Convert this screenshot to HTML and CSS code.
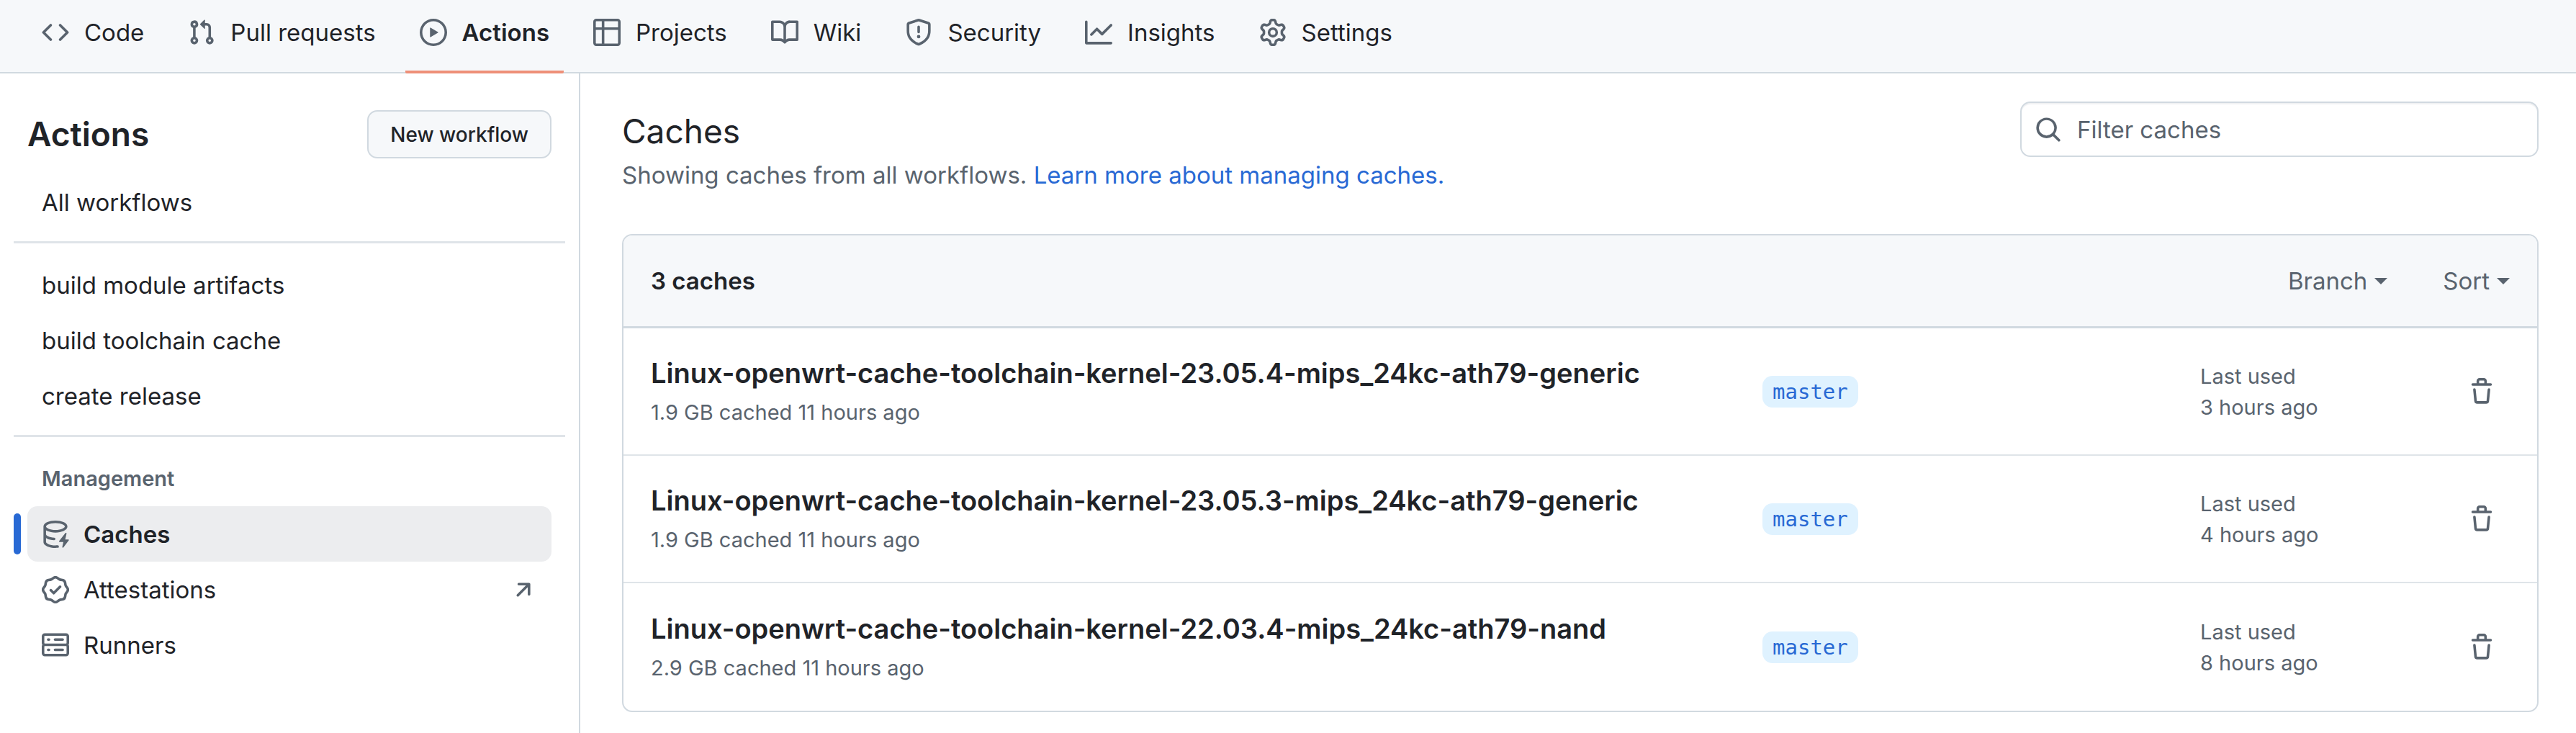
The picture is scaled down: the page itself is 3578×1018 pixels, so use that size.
FILE: index.html
```html
<!DOCTYPE html>
<html lang="en">
<head>
<meta charset="utf-8">
<meta name="viewport" content="width=device-width, initial-scale=1">
<title>Caches</title>
<link rel="stylesheet" href="styles.css">
</head>
<body>
<svg class="sprite" aria-hidden="true">
  <symbol id="trash" viewBox="0 0 16 16"><path d="M11 1.75V3h2.25a.75.75 0 0 1 0 1.5H2.75a.75.75 0 0 1 0-1.5H5V1.75C5 .784 5.784 0 6.75 0h2.5C10.216 0 11 .784 11 1.75ZM4.496 6.675l.66 6.6a.25.25 0 0 0 .249.225h5.19a.25.25 0 0 0 .249-.225l.66-6.6a.75.75 0 0 1 1.492.149l-.66 6.6A1.748 1.748 0 0 1 10.595 15h-5.19a1.75 1.75 0 0 1-1.741-1.575l-.66-6.6a.75.75 0 1 1 1.492-.15ZM6.5 1.75V3h3V1.75a.25.25 0 0 0-.25-.25h-2.5a.25.25 0 0 0-.25.25Z"/></symbol>
</svg>

<nav class="repo-nav" aria-label="Repository">
  <a class="tab" href="#code"><svg class="icon" viewBox="0 0 16 16"><path d="m11.28 3.22 4.25 4.25a.75.75 0 0 1 0 1.06l-4.25 4.25a.749.749 0 0 1-1.275-.326.749.749 0 0 1 .215-.734L13.94 8l-3.72-3.72a.749.749 0 0 1 .326-1.275.749.749 0 0 1 .734.215Zm-6.56 0a.751.751 0 0 1 1.042.018.751.751 0 0 1 .018 1.042L2.06 8l3.72 3.72a.749.749 0 0 1-.326 1.275.749.749 0 0 1-.734-.215L.47 8.53a.75.75 0 0 1 0-1.06Z"/></svg>Code</a>
  <a class="tab" href="#pulls"><svg class="icon" viewBox="0 0 16 16"><path d="M1.5 3.25a2.25 2.25 0 1 1 3 2.122v5.256a2.251 2.251 0 1 1-1.5 0V5.372A2.25 2.25 0 0 1 1.5 3.25Zm5.677-.177L9.573.677A.25.25 0 0 1 10 .854V2.5h1A2.5 2.5 0 0 1 13.5 5v5.628a2.251 2.251 0 1 1-1.5 0V5a1 1 0 0 0-1-1h-1v1.646a.25.25 0 0 1-.427.177L7.177 3.427a.25.25 0 0 1 0-.354ZM3.75 2.5a.75.75 0 1 0 0 1.5.75.75 0 0 0 0-1.5Zm0 9.5a.75.75 0 1 0 0 1.5.75.75 0 0 0 0-1.5Zm8.25.75a.75.75 0 1 0 1.5 0 .75.75 0 0 0-1.5 0Z"/></svg>Pull requests</a>
  <a class="tab tab-current" href="#actions" aria-current="page"><svg class="icon" viewBox="0 0 16 16"><path d="M8 0a8 8 0 1 1 0 16A8 8 0 0 1 8 0ZM1.5 8a6.5 6.5 0 1 0 13 0 6.5 6.5 0 0 0-13 0Zm4.879-2.773 4.264 2.559a.25.25 0 0 1 0 .428l-4.264 2.559A.25.25 0 0 1 6 10.559V5.442a.25.25 0 0 1 .379-.215Z"/></svg>Actions</a>
  <a class="tab" href="#projects"><svg class="icon" viewBox="0 0 16 16"><path d="M0 1.75C0 .784.784 0 1.75 0h12.5C15.216 0 16 .784 16 1.75v12.5A1.75 1.75 0 0 1 14.25 16H1.75A1.75 1.75 0 0 1 0 14.25ZM6.5 6.5v8h7.75a.25.25 0 0 0 .25-.25V6.5Zm8-1.5V1.75a.25.25 0 0 0-.25-.25H6.5V5Zm-13 1.5v7.75c0 .138.112.25.25.25H5v-8ZM5 5V1.5H1.75a.25.25 0 0 0-.25.25V5Z"/></svg>Projects</a>
  <a class="tab" href="#wiki"><svg class="icon" viewBox="0 0 16 16"><path d="M0 1.75A.75.75 0 0 1 .75 1h4.253c1.227 0 2.317.59 3 1.501A3.743 3.743 0 0 1 11.006 1h4.245a.75.75 0 0 1 .75.75v10.5a.75.75 0 0 1-.75.75h-4.507a2.25 2.25 0 0 0-1.591.659l-.622.621a.75.75 0 0 1-1.06 0l-.622-.621A2.25 2.25 0 0 0 5.258 13H.75a.75.75 0 0 1-.75-.75Zm7.251 10.324.004-5.073-.002-2.253A2.25 2.25 0 0 0 5.003 2.5H1.5v9h3.757a3.75 3.75 0 0 1 1.994.574ZM8.755 4.75l-.004 7.322a3.752 3.752 0 0 1 1.992-.572H14.5v-9h-3.495a2.25 2.25 0 0 0-2.25 2.25Z"/></svg>Wiki</a>
  <a class="tab" href="#security"><svg class="icon" viewBox="0 0 16 16"><path d="M7.467.133a1.748 1.748 0 0 1 1.066 0l5.25 1.68A1.75 1.75 0 0 1 15 3.48V7c0 1.566-.32 3.182-1.303 4.682-.983 1.498-2.585 2.813-5.032 3.855a1.697 1.697 0 0 1-1.33 0c-2.447-1.042-4.049-2.357-5.032-3.855C1.32 10.182 1 8.566 1 7V3.48a1.75 1.75 0 0 1 1.217-1.667Zm.61 1.429a.25.25 0 0 0-.153 0l-5.25 1.68a.25.25 0 0 0-.174.238V7c0 1.358.275 2.666 1.057 3.86.784 1.194 2.121 2.34 4.366 3.297a.196.196 0 0 0 .154 0c2.245-.956 3.582-2.104 4.366-3.298C13.225 9.666 13.5 8.36 13.5 7V3.48a.251.251 0 0 0-.174-.237l-5.25-1.68ZM8.75 4.75v3a.75.75 0 0 1-1.5 0v-3a.75.75 0 0 1 1.5 0ZM9 10.5a1 1 0 1 1-2 0 1 1 0 0 1 2 0Z"/></svg>Security</a>
  <a class="tab" href="#insights"><svg class="icon" viewBox="0 0 16 16"><path d="M1.5 1.75V13.5h13.75a.75.75 0 0 1 0 1.5H.75a.75.75 0 0 1-.75-.75V1.75a.75.75 0 0 1 1.5 0Zm14.28 2.53-5.25 5.25a.75.75 0 0 1-1.06 0L7 7.06 4.28 9.78a.751.751 0 0 1-1.042-.018.751.751 0 0 1-.018-1.042l3.25-3.25a.75.75 0 0 1 1.06 0L10 7.94l4.72-4.72a.751.751 0 0 1 1.042.018.751.751 0 0 1 .018 1.042Z"/></svg>Insights</a>
  <a class="tab" href="#settings"><svg class="icon" viewBox="0 0 16 16"><path d="M8 0a8.2 8.2 0 0 1 .701.031C9.444.095 9.99.645 10.16 1.29l.288 1.107c.018.066.079.158.212.224.231.114.454.243.668.386.123.082.233.09.299.071l1.103-.303c.644-.176 1.392.021 1.82.63.27.385.506.792.704 1.218.315.675.111 1.422-.364 1.891l-.814.806c-.049.048-.098.147-.088.294.016.257.016.515 0 .772-.01.147.038.246.088.294l.814.806c.475.469.679 1.216.364 1.891a7.977 7.977 0 0 1-.704 1.217c-.428.61-1.176.807-1.82.63l-1.102-.302c-.067-.019-.177-.011-.3.071a5.909 5.909 0 0 1-.668.386c-.133.066-.194.158-.211.224l-.29 1.106c-.168.646-.715 1.196-1.458 1.26a8.006 8.006 0 0 1-1.402 0c-.743-.064-1.289-.614-1.458-1.26l-.289-1.106c-.018-.066-.079-.158-.212-.224a5.738 5.738 0 0 1-.668-.386c-.123-.082-.233-.09-.299-.071l-1.103.303c-.644.176-1.392-.021-1.82-.63a8.12 8.12 0 0 1-.704-1.218c-.315-.675-.111-1.422.363-1.891l.815-.806c.05-.048.098-.147.088-.294a6.214 6.214 0 0 1 0-.772c.01-.147-.038-.246-.088-.294l-.815-.806C.635 6.045.431 5.298.746 4.623a7.92 7.92 0 0 1 .704-1.217c.428-.61 1.176-.807 1.82-.63l1.102.302c.067.019.177.011.3-.071.214-.143.437-.272.668-.386.133-.066.194-.158.211-.224l.29-1.106C6.009.645 6.556.095 7.299.03 7.53.01 7.764 0 8 0Zm-.571 1.525c-.036.003-.108.036-.137.146l-.289 1.105c-.147.561-.549.967-.998 1.189-.173.086-.34.183-.5.29-.417.278-.97.423-1.529.27l-1.103-.303c-.109-.03-.175.016-.195.045-.22.312-.412.644-.573.99-.014.031-.021.11.059.19l.815.806c.411.406.562.957.53 1.456a4.709 4.709 0 0 0 0 .582c.032.499-.119 1.05-.53 1.456l-.815.806c-.081.08-.073.159-.059.19.162.346.353.677.573.989.02.03.085.076.195.046l1.102-.303c.56-.153 1.113-.008 1.53.27.161.107.328.204.501.29.447.222.85.629.997 1.189l.289 1.105c.029.109.101.143.137.146a6.6 6.6 0 0 0 1.142 0c.036-.003.108-.036.137-.146l.289-1.105c.147-.561.549-.967.998-1.189.173-.086.34-.183.5-.29.417-.278.97-.423 1.529-.27l1.103.303c.109.029.175-.016.195-.045.22-.313.411-.644.573-.99.014-.031.021-.11-.059-.19l-.815-.806c-.411-.406-.562-.957-.53-1.456a4.709 4.709 0 0 0 0-.582c-.032-.499.119-1.05.53-1.456l.815-.806c.081-.08.073-.159.059-.19a6.464 6.464 0 0 0-.573-.989c-.02-.03-.085-.076-.195-.046l-1.102.303c-.56.153-1.113.008-1.53-.27a4.44 4.44 0 0 0-.501-.29c-.447-.222-.85-.629-.997-1.189l-.289-1.105c-.029-.11-.101-.143-.137-.146a6.6 6.6 0 0 0-1.142 0ZM11 8a3 3 0 1 1-6 0 3 3 0 0 1 6 0ZM9.5 8a1.5 1.5 0 1 0-3.001.001A1.5 1.5 0 0 0 9.5 8Z"/></svg>Settings</a>
</nav>

<div class="layout">
  <aside class="sidebar">
    <div class="sidebar-head">
      <h2 class="sidebar-title">Actions</h2>
      <button class="button" type="button">New workflow</button>
    </div>
    <ul class="menu">
      <li><a class="menu-item" href="#all">All workflows</a></li>
    </ul>
    <hr class="divider">
    <ul class="menu">
      <li><a class="menu-item" href="#module">build module artifacts</a></li>
      <li><a class="menu-item" href="#toolchain">build toolchain cache</a></li>
      <li><a class="menu-item" href="#release">create release</a></li>
    </ul>
    <hr class="divider">
    <h3 class="menu-heading">Management</h3>
    <ul class="menu">
      <li><a class="menu-item menu-item-current" href="#caches" aria-current="page"><svg class="icon" viewBox="0 0 16 16"><path d="M2.5 5.724V8c0 .248.238.7 1.169 1.159.874.43 2.144.745 3.62.822a.75.75 0 1 1-.078 1.498c-1.622-.085-3.102-.432-4.204-.975a5.565 5.565 0 0 1-.507-.28V12.5c0 .133.058.318.282.551.227.237.591.483 1.101.707 1.015.447 2.47.742 4.117.742.406 0 .802-.018 1.183-.052a.751.751 0 1 1 .134 1.494C8.89 15.98 8.45 16 8 16c-1.805 0-3.475-.32-4.721-.869-.623-.274-1.173-.619-1.579-1.041-.408-.425-.7-.964-.7-1.59v-9c0-.626.292-1.165.7-1.591.406-.42.956-.766 1.579-1.04C4.525.32 6.195 0 8 0c1.806 0 3.476.32 4.721.869.623.274 1.173.619 1.579 1.041.408.425.7.964.7 1.59 0 .626-.292 1.165-.7 1.591-.406.42-.956.766-1.578 1.04C11.475 6.68 9.805 7 8 7c-1.805 0-3.475-.32-4.721-.869a6.15 6.15 0 0 1-.779-.407Zm0-2.224c0 .133.058.318.282.551.227.237.591.483 1.101.707C4.898 5.205 6.353 5.5 8 5.5c1.646 0 3.101-.295 4.118-.742.508-.224.873-.471 1.1-.708.224-.232.282-.417.282-.55 0-.133-.058-.318-.282-.551-.227-.237-.591-.483-1.101-.707C11.102 1.795 9.647 1.5 8 1.5c-1.646 0-3.101.295-4.118.742-.508.224-.873.471-1.1.708-.224.232-.282.417-.282.55Z"/><path d="M14.49 7.582a.375.375 0 0 0-.66-.313l-3.625 4.625a.375.375 0 0 0 .295.606h2.127l-.619 2.922a.375.375 0 0 0 .666.304l3.125-4.125A.375.375 0 0 0 15.5 11h-1.778l.769-3.418Z"/></svg>Caches</a></li>
      <li><a class="menu-item" href="#attestations"><svg class="icon" viewBox="0 0 16 16"><path d="m9.585.52.929.68c.153.112.331.186.518.215l1.138.175a2.678 2.678 0 0 1 2.24 2.24l.174 1.139c.029.187.103.365.215.518l.68.928a2.677 2.677 0 0 1 0 3.17l-.68.928a1.174 1.174 0 0 0-.215.518l-.175 1.138a2.678 2.678 0 0 1-2.241 2.241l-1.138.175a1.17 1.17 0 0 0-.518.215l-.928.68a2.677 2.677 0 0 1-3.17 0l-.928-.68a1.174 1.174 0 0 0-.518-.215L3.83 14.41a2.678 2.678 0 0 1-2.24-2.24l-.175-1.138a1.17 1.17 0 0 0-.215-.518l-.68-.928a2.677 2.677 0 0 1 0-3.17l.68-.928c.112-.153.186-.331.215-.518l.175-1.14a2.678 2.678 0 0 1 2.24-2.24l1.139-.175c.187-.029.365-.103.518-.215l.928-.68a2.677 2.677 0 0 1 3.17 0ZM7.303 1.728l-.927.68a2.67 2.67 0 0 1-1.18.489l-1.137.174a1.179 1.179 0 0 0-.987.987l-.174 1.136a2.677 2.677 0 0 1-.489 1.18l-.68.928a1.18 1.18 0 0 0 0 1.394l.68.927c.256.348.424.753.489 1.18l.174 1.137c.078.509.478.909.987.987l1.136.174a2.67 2.67 0 0 1 1.18.489l.928.68c.414.305.979.305 1.394 0l.927-.68a2.67 2.67 0 0 1 1.18-.489l1.137-.174a1.18 1.18 0 0 0 .987-.987l.174-1.136a2.67 2.67 0 0 1 .489-1.18l.68-.928a1.176 1.176 0 0 0 0-1.394l-.68-.927a2.686 2.686 0 0 1-.489-1.18l-.174-1.137a1.179 1.179 0 0 0-.987-.987l-1.136-.174a2.677 2.677 0 0 1-1.18-.489l-.928-.68a1.176 1.176 0 0 0-1.394 0ZM11.28 6.78l-3.75 3.75a.75.75 0 0 1-1.06 0L4.72 8.78a.751.751 0 0 1 .018-1.042.751.751 0 0 1 1.042-.018L7 8.94l3.22-3.22a.751.751 0 0 1 1.042.018.751.751 0 0 1 .018 1.042Z"/></svg>Attestations<svg class="icon icon-end" viewBox="0 0 16 16"><path d="M4.53 4.75A.75.75 0 0 1 5.28 4h6.01a.75.75 0 0 1 .75.75v6.01a.75.75 0 0 1-1.5 0v-4.2l-5.26 5.261a.749.749 0 0 1-1.275-.326.749.749 0 0 1 .215-.734L9.48 5.5h-4.2a.75.75 0 0 1-.75-.75Z"/></svg></a></li>
      <li><a class="menu-item" href="#runners"><svg class="icon" viewBox="0 0 16 16"><path d="M1.75 1h12.5c.966 0 1.75.784 1.75 1.75v4c0 .372-.116.717-.314 1 .198.283.314.628.314 1v4a1.75 1.75 0 0 1-1.75 1.75H1.75A1.75 1.75 0 0 1 0 12.75v-4c0-.358.109-.707.314-1a1.739 1.739 0 0 1-.314-1v-4C0 1.784.784 1 1.75 1ZM1.5 2.75v4c0 .138.112.25.25.25h12.5a.25.25 0 0 0 .25-.25v-4a.25.25 0 0 0-.25-.25H1.75a.25.25 0 0 0-.25.25Zm.25 5.75a.25.25 0 0 0-.25.25v4c0 .138.112.25.25.25h12.5a.25.25 0 0 0 .25-.25v-4a.25.25 0 0 0-.25-.25ZM7 4.75A.75.75 0 0 1 7.75 4h4.5a.75.75 0 0 1 0 1.5h-4.5A.75.75 0 0 1 7 4.75ZM7.75 10h4.5a.75.75 0 0 1 0 1.5h-4.5a.75.75 0 0 1 0-1.5ZM3 4.75A.75.75 0 0 1 3.75 4h.5a.75.75 0 0 1 0 1.5h-.5A.75.75 0 0 1 3 4.75ZM3.75 10h.5a.75.75 0 0 1 0 1.5h-.5a.75.75 0 0 1 0-1.5Z"/></svg>Runners</a></li>
    </ul>
  </aside>

  <main class="content">
    <header class="page-head">
      <div>
        <h1 class="page-title">Caches</h1>
        <p class="page-note">Showing caches from all workflows. <a class="link" href="#learn">Learn more about managing caches.</a></p>
      </div>
      <label class="search">
        <svg class="icon" viewBox="0 0 16 16"><path d="M10.68 11.74a6 6 0 0 1-7.922-8.982 6 6 0 0 1 8.982 7.922l3.04 3.04a.749.749 0 0 1-.326 1.275.749.749 0 0 1-.734-.215ZM11.5 7a4.499 4.499 0 1 0-8.997 0A4.499 4.499 0 0 0 11.5 7Z"/></svg>
        <input class="search-input" type="text" placeholder="Filter caches" aria-label="Filter caches">
      </label>
    </header>

    <section class="box">
      <div class="box-head">
        <h2 class="box-title">3 caches</h2>
        <div class="filters">
          <button class="filter" type="button" aria-haspopup="menu">Branch</button>
          <button class="filter" type="button" aria-haspopup="menu">Sort</button>
        </div>
      </div>
      <table class="caches">
        <colgroup><col class="col-name"><col class="col-branch"><col class="col-used"><col class="col-delete"></colgroup>
        <tbody>
          <tr>
            <td><span class="cache-name">Linux-openwrt-cache-toolchain-kernel-23.05.4-mips_24kc-ath79-generic</span><span class="meta">1.9 GB cached 11 hours ago</span></td>
            <td><a class="branch" href="#master">master</a></td>
            <td><span class="meta">Last used<br>3 hours ago</span></td>
            <td><button class="delete" type="button" aria-label="Delete cache"><svg class="icon"><use href="#trash"/></svg></button></td>
          </tr>
          <tr>
            <td><span class="cache-name">Linux-openwrt-cache-toolchain-kernel-23.05.3-mips_24kc-ath79-generic</span><span class="meta">1.9 GB cached 11 hours ago</span></td>
            <td><a class="branch" href="#master">master</a></td>
            <td><span class="meta">Last used<br>4 hours ago</span></td>
            <td><button class="delete" type="button" aria-label="Delete cache"><svg class="icon"><use href="#trash"/></svg></button></td>
          </tr>
          <tr>
            <td><span class="cache-name">Linux-openwrt-cache-toolchain-kernel-22.03.4-mips_24kc-ath79-nand</span><span class="meta">2.9 GB cached 11 hours ago</span></td>
            <td><a class="branch" href="#master">master</a></td>
            <td><span class="meta">Last used<br>8 hours ago</span></td>
            <td><button class="delete" type="button" aria-label="Delete cache"><svg class="icon"><use href="#trash"/></svg></button></td>
          </tr>
        </tbody>
      </table>
    </section>
  </main>
</div>
</body>
</html>
```
FILE: styles.css
```css
:root {
  --text: #1f2328;
  --muted: #59636e;
  --border: #d1d9e0;
  --border-soft: #dfe4e9;
  --subtle: #f6f8fa;
  --link: #2869d4;
}

* {
  box-sizing: border-box;
}

body {
  margin: 0;
  min-height: 100vh;
  display: flex;
  flex-direction: column;
  background: #fff;
  color: var(--text);
  font-family: Inter, "Liberation Sans", sans-serif;
  font-size: 33px;
  line-height: 48px;
}

h1, h2, h3, p, ul {
  margin: 0;
  padding: 0;
}

ul {
  list-style: none;
}

a {
  color: inherit;
  text-decoration: none;
}

button, input {
  font: inherit;
  color: inherit;
}

.sprite {
  display: none;
}

.icon {
  flex: none;
  display: block;
  width: 38px;
  height: 38px;
  fill: var(--muted);
}

/* Repository navigation */

.repo-nav {
  display: flex;
  gap: 21px;
  padding: 0 38px;
  background: var(--subtle);
  border-bottom: 2px solid var(--border);
}

.tab {
  display: flex;
  align-items: center;
  gap: 21px;
  height: 102px;
  margin-bottom: -2px;
  padding: 0 20px 12px;
  white-space: nowrap;
}

.tab-current {
  padding-bottom: 8px;
  border-bottom: 4px solid #ee9078;
  border-radius: 2px;
  font-weight: 600;
}

/* Page columns */

.layout {
  flex: 1;
  display: flex;
}

.sidebar {
  flex: none;
  width: 806px;
  padding: 51px 38px;
  border-right: 2px solid var(--border);
}

.content {
  flex: 1;
  min-width: 0;
  padding: 39px 52px 28px 58px;
}

/* Sidebar */

.sidebar-head {
  display: flex;
  align-items: center;
  justify-content: space-between;
  margin-bottom: 22px;
}

.sidebar-title {
  font-size: 46px;
  font-weight: 600;
  line-height: 67px;
}

.button {
  height: 67px;
  padding: 0 30px;
  border: 2px solid var(--border);
  border-radius: 14px;
  background: var(--subtle);
  font-size: 28px;
  font-weight: 500;
}

.menu-item {
  position: relative;
  display: flex;
  align-items: center;
  gap: 20px;
  height: 77px;
  padding: 0 20px;
  border-radius: 14px;
}

.menu-item-current {
  background: #ecedef;
  font-weight: 600;
}

.menu-item-current::before {
  content: "";
  position: absolute;
  left: -19px;
  top: 10px;
  bottom: 10px;
  width: 10px;
  border-radius: 5px;
  background: var(--link);
}

.icon-end {
  margin-left: auto;
}

.divider {
  height: 3px;
  margin: 16px -19px 19px;
  border: 0;
  background: var(--border-soft);
}

.menu-heading {
  padding: 15px 20px 14px;
  color: var(--muted);
  font-size: 29px;
  font-weight: 600;
}

/* Page heading */

.page-head {
  display: flex;
  align-items: flex-start;
  justify-content: space-between;
  margin-bottom: 62px;
}

.page-title {
  font-size: 46px;
  font-weight: 400;
  line-height: 82px;
}

.page-note {
  line-height: 40px;
  color: var(--muted);
}

.link {
  color: var(--link);
}

.search {
  display: flex;
  align-items: center;
  gap: 21px;
  width: 720px;
  height: 77px;
  padding: 0 18px;
  border: 2px solid var(--border);
  border-radius: 14px;
  box-shadow: inset 0 2px 1px #f0f1f3;
}

.search-input {
  flex: 1;
  min-width: 0;
  padding: 0;
  border: 0;
  outline: 0;
  background: none;
}

.search-input::placeholder {
  color: var(--muted);
  opacity: 1;
}

/* Cache list */

.box {
  border: 2px solid var(--border);
  border-radius: 14px;
}

.box-head {
  display: flex;
  align-items: center;
  justify-content: space-between;
  height: 129px;
  padding: 0 38px;
  border-bottom: 3px solid var(--border);
  border-radius: 12px 12px 0 0;
  background: var(--subtle);
}

.box-title {
  font-size: 33px;
  font-weight: 600;
}

.filters {
  display: flex;
  gap: 77px;
}

.filter {
  display: flex;
  align-items: center;
  gap: 10px;
  padding: 0;
  border: 0;
  background: none;
  color: var(--muted);
}

.filter::after {
  content: "";
  border: 9px solid transparent;
  border-top-color: currentColor;
  border-bottom: 0;
}

.caches {
  width: 100%;
  table-layout: fixed;
  border-spacing: 0;
}

.caches td {
  height: 177px;
  padding: 0;
  border-bottom: 2px solid var(--border-soft);
  vertical-align: middle;
}

.caches td:first-child {
  padding-left: 38px;
}

.caches tr:last-child td {
  border-bottom: 0;
}

.col-branch {
  width: 608px;
}

.col-used {
  width: 372px;
}

.col-delete {
  width: 96px;
}

.cache-name {
  display: block;
  margin-bottom: 9px;
  font-size: 38px;
  font-weight: 600;
}

.meta {
  display: block;
  color: var(--muted);
  font-size: 29px;
  line-height: 43px;
}

.branch {
  display: block;
  width: fit-content;
  padding: 0 14px;
  border-radius: 14px;
  background: #dff2ff;
  color: var(--link);
  font-family: "DejaVu Sans Mono", monospace;
  font-size: 29px;
  line-height: 44px;
}

.delete {
  display: block;
  padding: 0;
  border: 0;
  background: none;
}
```
